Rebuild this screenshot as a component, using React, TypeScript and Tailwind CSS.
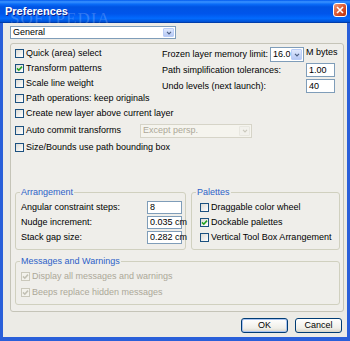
import type { ReactNode } from "react";

function Check({ checked, disabled }: { checked?: boolean; disabled?: boolean }) {
  return (
    <span
      className={`flex h-[9px] w-[9px] shrink-0 items-center justify-center border ${
        disabled
          ? "border-[#cac8bb] bg-[#f3f2ec]"
          : "border-[#1c5180] bg-[linear-gradient(135deg,#dcdbd5,#ffffff)]"
      }`}
    >
      {checked && (
        <svg viewBox="0 0 7 7" className="h-[7px] w-[7px]">
          <path
            d="M1 3.4 L2.8 5.2 L6 1.6"
            fill="none"
            stroke={disabled ? "#c2c0b4" : "#21a121"}
            strokeWidth="1.6"
          />
        </svg>
      )}
    </span>
  );
}

function CheckRow({
  label,
  checked,
  disabled,
  className = "h-[15px]",
}: {
  label: string;
  checked?: boolean;
  disabled?: boolean;
  className?: string;
}) {
  return (
    <div className={`flex items-center gap-[2px] whitespace-nowrap ${className}`}>
      <Check checked={checked} disabled={disabled} />
      <span className={disabled ? "text-[#aca899]" : ""}>{label}</span>
    </div>
  );
}

function Combo({ value, className, disabled }: { value: string; className: string; disabled?: boolean }) {
  return (
    <div
      className={`flex items-center border ${
        disabled ? "border-[#d6d4c8] bg-[#f5f4ee] text-[#aca899]" : "border-[#7f9db9] bg-white"
      } ${className}`}
    >
      <span className="min-w-0 flex-1 whitespace-nowrap pl-[2px]">{value}</span>
      <span
        className={`mr-[1px] flex h-[calc(100%-2px)] w-[11px] shrink-0 items-center justify-center rounded-[1px] border ${
          disabled
            ? "border-[#e8e7e0] bg-[#f2f1ec]"
            : "border-[#b9cdf7] bg-[linear-gradient(#dfe8fd,#b6c9f4)]"
        }`}
      >
        <svg viewBox="0 0 7 5" className="h-[4px] w-[6px]">
          <path d="M1 1 L3.5 3.5 L6 1" fill="none" stroke={disabled ? "#cbc9bd" : "#4d6185"} strokeWidth="1.5" />
        </svg>
      </span>
    </div>
  );
}

function Field({ value, className }: { value: string; className: string }) {
  return (
    <div className={`flex items-center border border-[#7f9db9] bg-white pl-[2px] whitespace-nowrap ${className}`}>
      {value}
    </div>
  );
}

function Group({ title, className, children }: { title: string; className: string; children: ReactNode }) {
  return (
    <fieldset className={`rounded-[3px] border border-[#d0d0bf] ${className}`}>
      <legend className="-ml-[1px] px-[1px] leading-[10px] text-[#2d62c8]">{title}</legend>
      {children}
    </fieldset>
  );
}

function Button({ label, primary }: { label: string; primary?: boolean }) {
  return (
    <div
      className={`flex h-[15px] w-[47px] items-center justify-center rounded-[3px] border border-[#003c74] bg-[linear-gradient(#ffffff,#f0efe9_70%,#d8d5c9)] ${
        primary ? "shadow-[inset_0_0_0_1px_#a9c3f0]" : ""
      }`}
    >
      {label}
    </div>
  );
}

export default function App() {
  return (
    <div className="relative flex h-[341px] w-[350px] flex-col overflow-hidden bg-[#2a5fd9] font-['Liberation_Sans_Narrow','Liberation_Sans',Arial,sans-serif] text-[9px] leading-[11px] text-black">
      {/* title bar */}
      <div className="flex h-[23px] shrink-0 items-start justify-between bg-[linear-gradient(#0058ee,#3a93ff_8%,#0a6cf8_18%,#0054e3_30%,#0055eb_60%,#026afe_80%,#0052d6_94%,#003092)] pl-[5px] pr-[3px]">
        <span className="mt-[5px] text-[11px] leading-[13px] font-bold text-white [text-shadow:1px_1px_#0f1f89]">
          Preferences
        </span>
        <span className="mt-[3px] flex h-[14px] w-[14px] items-center justify-center rounded-[3px] border border-white bg-[linear-gradient(135deg,#f09a78,#d8522c_55%,#b63310)]">
          <svg viewBox="0 0 8 8" className="h-[8px] w-[8px]">
            <path d="M1 1 L7 7 M7 1 L1 7" stroke="white" strokeWidth="1.6" />
          </svg>
        </span>
      </div>

      {/* watermark */}
      <div className="pointer-events-none absolute left-[10px] top-[12px] font-['Liberation_Serif',serif] text-[17px] leading-[13px] tracking-[1px] text-white/20">
        SOFTPEDIA
      </div>

      {/* body */}
      <div className="mx-[3px] mb-[4px] flex flex-1 flex-col bg-[#ecebe6] pl-[7px] pr-[5px]">
        <Combo value="General" className="mt-[3px] h-[13px] w-[166px]" />

        <div className="mt-[4px] h-[269px] w-[334px] shrink-0 rounded-[3px] border border-[#c5c4b8] bg-[#efeeea] pl-[4px] pr-[3px] pt-[2px]">
          <div className="flex">
            <div className="flex w-[147px] flex-col">
              <CheckRow label="Quick (area) select" />
              <CheckRow label="Transform patterns" checked />
              <CheckRow label="Scale line weight" />
              <CheckRow label="Path operations: keep originals" />
              <CheckRow label="Create new layer above current layer" />
            </div>
            <div className="flex flex-col pt-[1px] whitespace-nowrap">
              <div className="flex h-[15px] items-center">
                <span className="w-[108px]">Frozen layer memory limit:</span>
                <Combo value="16.0" className="h-[15px] w-[34px]" />
                <span className="ml-[2px] self-start">M bytes</span>
              </div>
              <div className="mt-[1px] flex h-[14px] items-center">
                <span className="w-[144px]">Path simplification tolerances:</span>
                <Field value="1.00" className="h-[14px] w-[29px]" />
              </div>
              <div className="mt-[2px] flex h-[14px] items-center">
                <span className="w-[144px]">Undo levels (next launch):</span>
                <Field value="40" className="h-[14px] w-[29px]" />
              </div>
            </div>
          </div>
          <div className="flex h-[19px] items-center">
            <CheckRow label="Auto commit transforms" className="w-[125px]" />
            <Combo value="Except persp." className="h-[14px] w-[112px]" disabled />
          </div>
          <CheckRow label="Size/Bounds use path bounding box" />

          <div className="mt-[32px] flex">
            <Group title="Arrangement" className="w-[171px] pb-[4px] pl-[5px] pt-[3px]">
              <div className="flex h-[15px] items-center">
                <span className="w-[126px]">Angular constraint steps:</span>
                <Field value="8" className="h-[13px] w-[35px]" />
              </div>
              <div className="flex h-[15px] items-center">
                <span className="w-[126px]">Nudge increment:</span>
                <Field value="0.035 cm" className="h-[13px] w-[35px]" />
              </div>
              <div className="flex h-[15px] items-center">
                <span className="w-[126px]">Stack gap size:</span>
                <Field value="0.282 cm" className="h-[13px] w-[35px]" />
              </div>
            </Group>
            <Group title="Palettes" className="ml-[5px] w-[149px] pb-[4px] pl-[8px] pt-[3px] [&>legend]:-ml-[4px]">
              <CheckRow label="Draggable color wheel" />
              <CheckRow label="Dockable palettes" checked />
              <CheckRow label="Vertical Tool Box Arrangement" />
            </Group>
          </div>

          <Group title="Messages and Warnings" className="mt-[6px] w-[325px] pb-[4px] pl-[5px] pt-[2px]">
            <CheckRow label="Display all messages and warnings" checked disabled className="h-[16px]" />
            <CheckRow label="Beeps replace hidden messages" checked disabled className="h-[16px]" />
          </Group>
        </div>

        <div className="mt-[6px] flex justify-end gap-[7px]">
          <Button label="OK" primary />
          <Button label="Cancel" />
        </div>
      </div>
    </div>
  );
}
